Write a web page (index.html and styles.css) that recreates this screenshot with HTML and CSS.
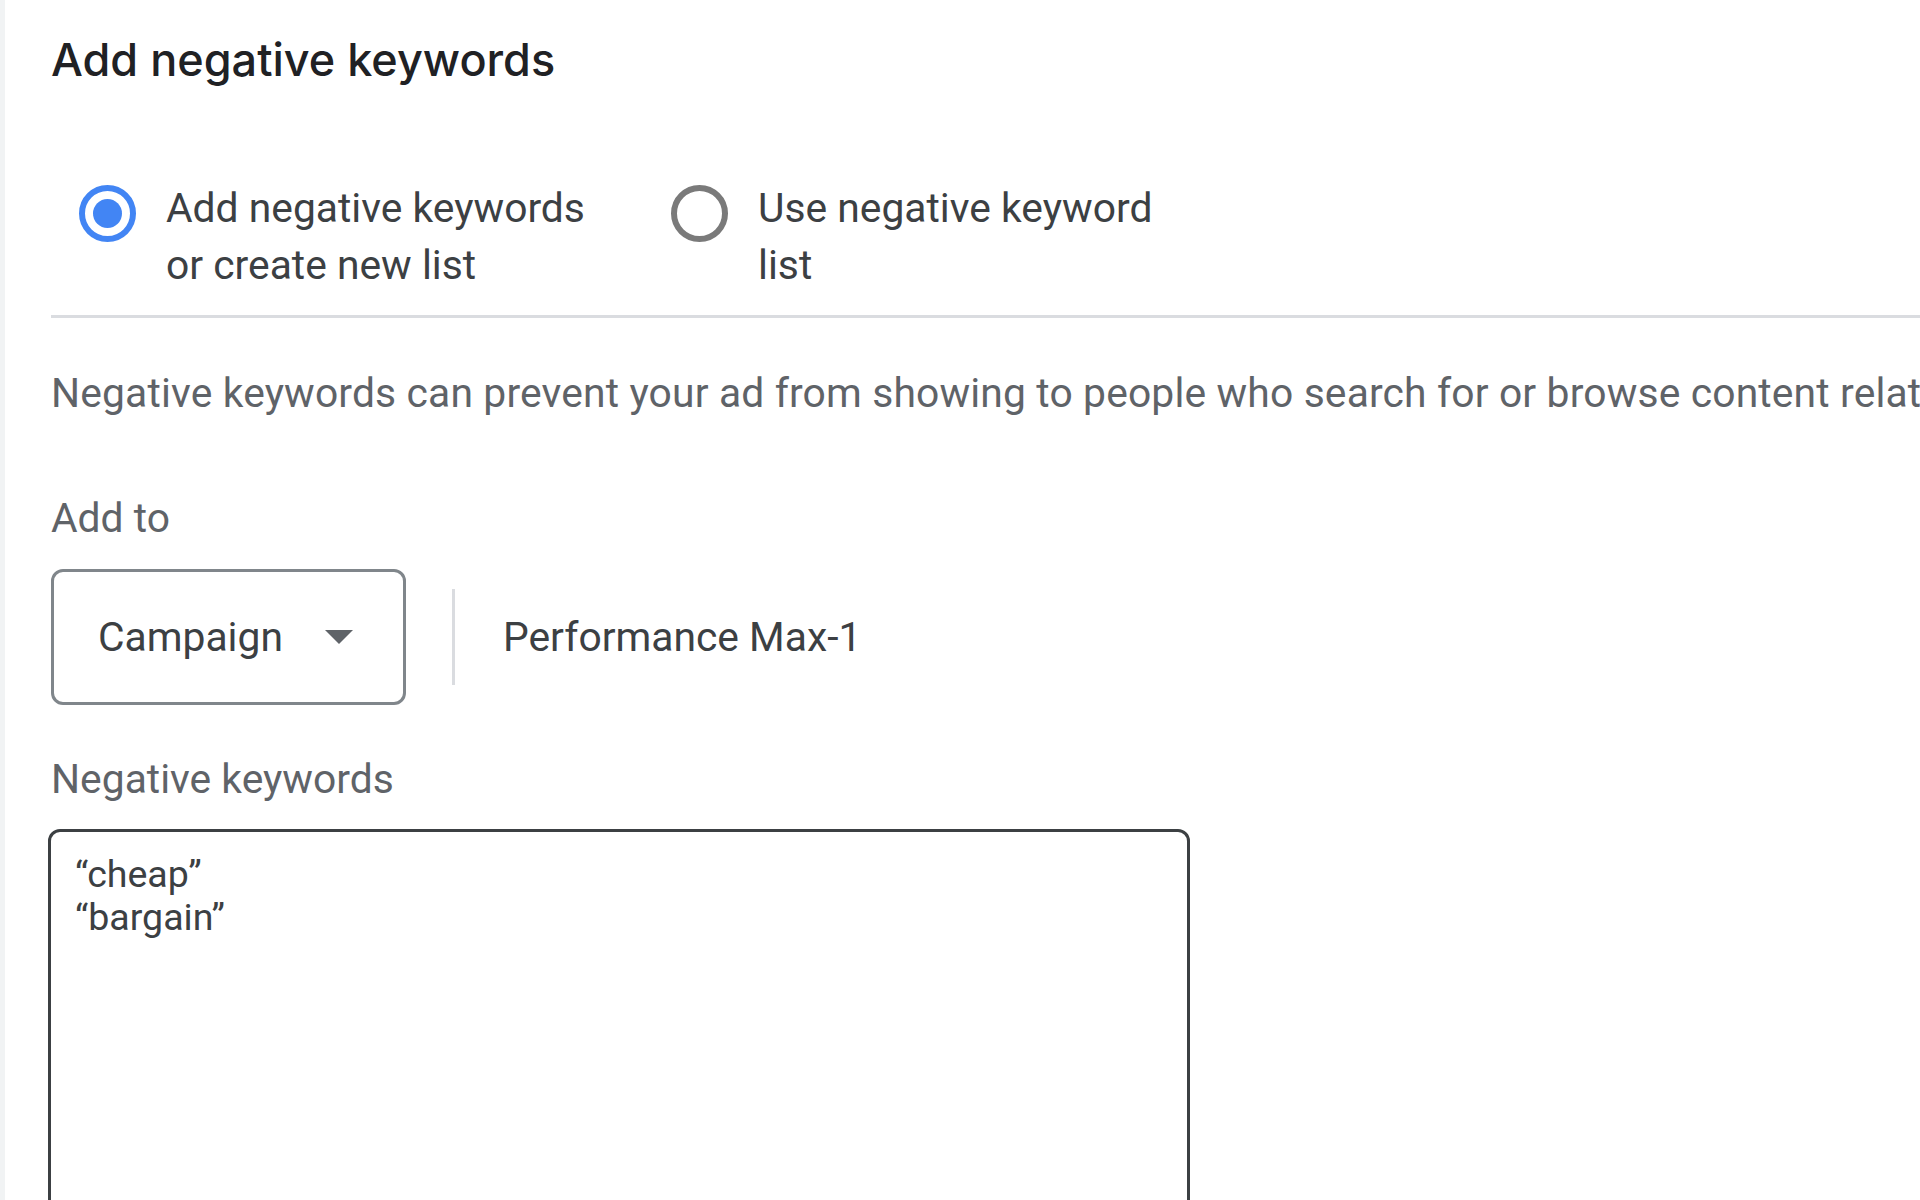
FILE: index.html
```html
<!DOCTYPE html>
<html lang="en">
<head>
    <meta charset="UTF-8">
    <meta name="viewport" content="width=device-width, initial-scale=1.0">
    <title>Add negative keywords</title>
    <link rel="stylesheet" href="styles.css">
</head>
<body>
    <main class="panel">
        <h1 class="panel-title">Add negative keywords</h1>

        <div class="radio-group">
            <label class="radio-option">
                <span class="radio checked"></span>
                <span class="radio-label">Add negative keywords or create new list</span>
            </label>
            <label class="radio-option">
                <span class="radio"></span>
                <span class="radio-label">Use negative keyword list</span>
            </label>
        </div>

        <hr class="divider">

        <p class="description">Negative keywords can prevent your ad from showing to people who search for or browse content related to those terms.</p>

        <div class="field-label">Add to</div>
        <div class="add-to-row">
            <div class="select">
                <span class="select-value">Campaign</span>
                <span class="select-arrow"></span>
            </div>
            <span class="row-separator"></span>
            <span class="campaign-name">Performance Max-1</span>
        </div>

        <div class="field-label keywords-label">Negative keywords</div>
        <div class="keywords-box">
            <div>“cheap”</div>
            <div>“bargain”</div>
        </div>
    </main>
</body>
</html>
```

FILE: styles.css
```css
/* General Styles */
html, body {
    height: 100%;
}

body {
    margin: 0;
    overflow: hidden;
    background-color: #f1f3f4;
    font-family: 'Roboto', 'Liberation Sans', sans-serif;
    color: #3c4043;
}

.panel {
    margin-left: 5px;
    min-height: 100%;
    padding: 32px 0 0 46px;
    background-color: #fff;
    box-sizing: border-box;
}

.panel-title {
    margin: 0;
    font-family: 'Inter', 'Roboto', sans-serif;
    font-size: 45px;
    font-weight: 500;
    line-height: 56px;
    color: #202124;
}

/* Radio options */
.radio-group {
    display: flex;
    gap: 65px;
    margin: 92px 0 0 28px;
}

.radio-option {
    display: flex;
    align-items: flex-start;
    gap: 30px;
}

.radio {
    width: 57px;
    height: 57px;
    margin-top: 5px;
    border: 6px solid #7a7a7a;
    border-radius: 50%;
    box-sizing: border-box;
    flex-shrink: 0;
    display: flex;
    align-items: center;
    justify-content: center;
}

.radio.checked {
    border-color: #4285f4;
}

.radio.checked::after {
    content: "";
    width: 29px;
    height: 29px;
    border-radius: 50%;
    background-color: #4285f4;
}

.radio-label {
    width: 440px;
    font-size: 40.8px;
    line-height: 57px;
    color: #3c4043;
}

.divider {
    margin: 21px 0 0;
    border: none;
    border-top: 3px solid #dadce0;
}

.description {
    margin: 46px 0 0;
    font-size: 40.8px;
    letter-spacing: 0.15px;
    line-height: 58px;
    color: #5f6368;
    white-space: nowrap;
    overflow: hidden;
}

.field-label {
    margin-top: 67px;
    font-size: 40.8px;
    line-height: 58px;
    color: #5f6368;
}

/* Add to row */
.add-to-row {
    display: flex;
    align-items: center;
    margin-top: 22px;
}

.select {
    width: 355px;
    height: 136px;
    padding: 0 50px 0 44px;
    border: 3px solid #80868b;
    border-radius: 12px;
    box-sizing: border-box;
    display: flex;
    align-items: center;
    justify-content: space-between;
}

.select-value,
.campaign-name {
    font-size: 40.8px;
    line-height: 58px;
    color: #3c4043;
}

.select-arrow {
    width: 0;
    height: 0;
    border-left: 14px solid transparent;
    border-right: 14px solid transparent;
    border-top: 14px solid #5f6368;
}

.row-separator {
    width: 3px;
    height: 96px;
    margin: 0 48px 0 46px;
    background-color: #dadce0;
}

.keywords-label {
    margin-top: 45px;
}

.keywords-box {
    width: 1142px;
    height: 460px;
    margin: 21px 0 0 -3px;
    padding: 21px 24px;
    border: 3px solid #3c4043;
    border-radius: 12px;
    box-sizing: border-box;
    font-size: 37.5px;
    line-height: 42.5px;
    color: #3c4043;
}
```
